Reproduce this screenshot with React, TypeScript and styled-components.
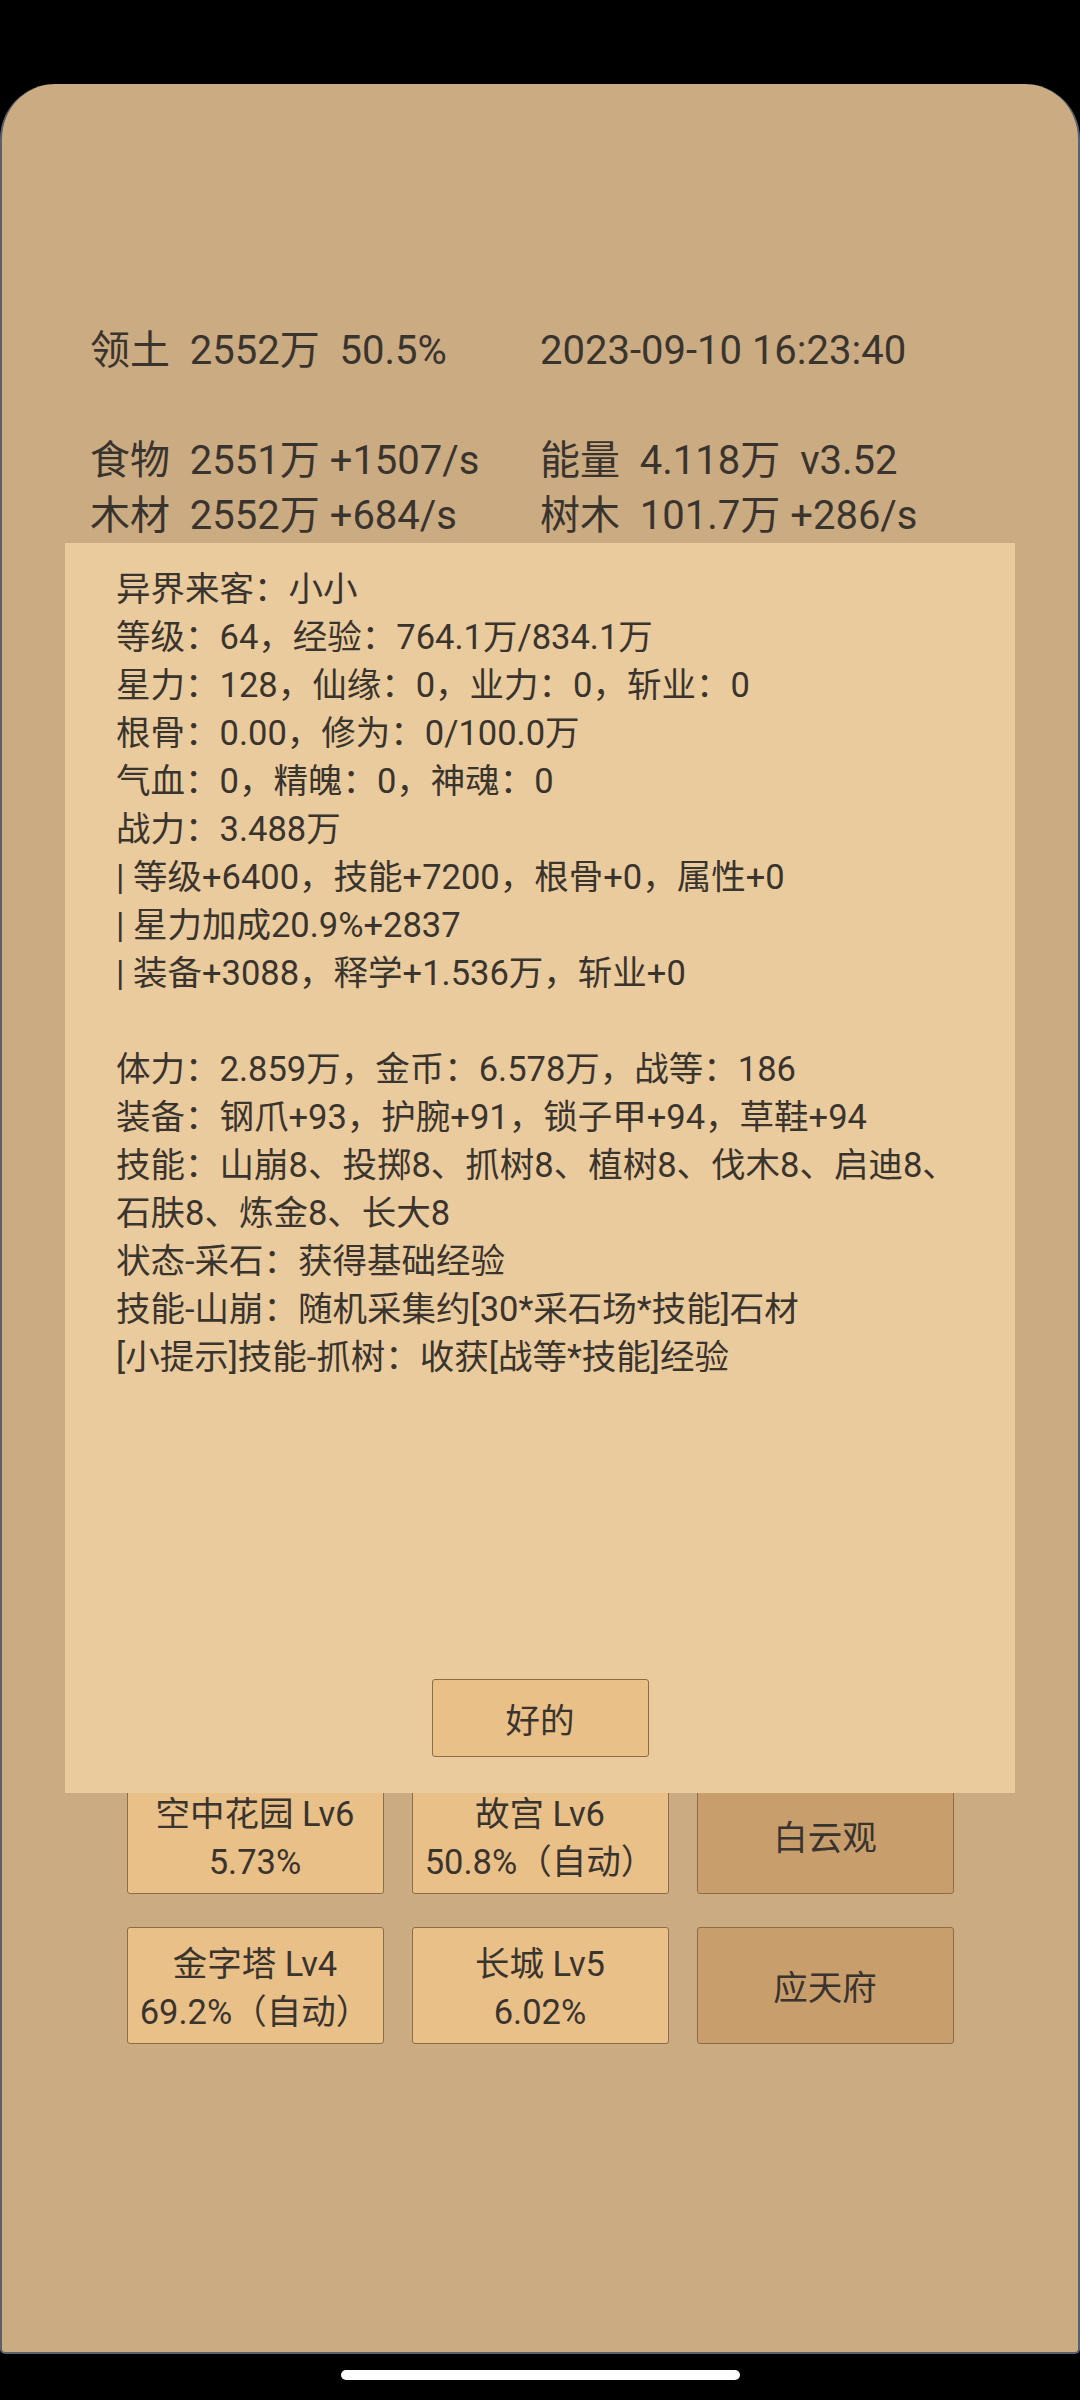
import React from "react";
import styled, { createGlobalStyle } from "styled-components";

const GlobalStyle = createGlobalStyle`
  body {
    margin: 0;
    background: #000;
    font-family: Roboto, "Noto Sans CJK SC", sans-serif;
    color: #3a342e;
  }
`;

const Screen = styled.div`
  width: 1080px;
  height: 2400px;
  background: #000;
  padding-top: 84px;
  box-sizing: border-box;
  display: flex;
  flex-direction: column;
  align-items: center;
`;

const Panel = styled.div`
  position: relative;
  width: 1080px;
  height: 2270px;
  box-sizing: border-box;
  background: #cbab82;
  border: 2px solid #58616e;
  border-top: none;
  border-radius: 55px 55px 5px 5px;
  padding-top: 239px;
`;

const Stats = styled.div`
  display: grid;
  grid-template-columns: 450px 450px;
  padding-left: 88px;
  font-size: 40px;
  line-height: 55px;
  white-space: pre;
`;

const StatCell = styled.div`
  height: 55px;
`;

const Buildings = styled.div`
  margin-top: 1234px;
  display: grid;
  grid-template-columns: repeat(3, 257px);
  grid-auto-rows: 117px;
  gap: 33px 28px;
  justify-content: center;
`;

const Building = styled.div<{ $dark?: boolean }>`
  box-sizing: border-box;
  background: ${({ $dark }) => ($dark ? "#c99e6d" : "#e9c088")};
  border: 1.5px solid #8d6c48;
  border-radius: 3px;
  display: flex;
  flex-direction: column;
  align-items: center;
  justify-content: center;
  font-size: 34.5px;
  line-height: 48px;
  white-space: nowrap;
  padding-top: 4px;
`;

const Modal = styled.div`
  position: absolute;
  left: 63px;
  top: 459px;
  width: 950px;
  height: 1250px;
  box-sizing: border-box;
  background: #eacb9d;
  padding: 22px 51px 36px;
  display: flex;
  flex-direction: column;
  font-size: 34.5px;
  line-height: 48px;
`;

const Line = styled.div`
  min-height: 48px;
`;

const OkButton = styled.button`
  margin-top: auto;
  align-self: center;
  width: 217px;
  height: 78px;
  background: #e9c088;
  border: 1.5px solid #8d6c48;
  border-radius: 3px;
  font-family: inherit;
  font-size: 34.5px;
  color: #3a342e;
  padding: 0;
`;

const HomeBar = styled.div`
  margin-top: 16px;
  width: 399px;
  height: 10px;
  border-radius: 5px;
  background: #fff;
`;

const stats = [
  "领土  2552万  50.5%",
  "2023-09-10 16:23:40",
  "",
  "",
  "食物  2551万 +1507/s",
  "能量  4.118万  v3.52",
  "木材  2552万 +684/s",
  "树木  101.7万 +286/s",
];

const lines = [
  "异界来客：小小",
  "等级：64，经验：764.1万/834.1万",
  "星力：128，仙缘：0，业力：0，斩业：0",
  "根骨：0.00，修为：0/100.0万",
  "气血：0，精魄：0，神魂：0",
  "战力：3.488万",
  "| 等级+6400，技能+7200，根骨+0，属性+0",
  "| 星力加成20.9%+2837",
  "| 装备+3088，释学+1.536万，斩业+0",
  "",
  "体力：2.859万，金币：6.578万，战等：186",
  "装备：钢爪+93，护腕+91，锁子甲+94，草鞋+94",
  "技能：山崩8、投掷8、抓树8、植树8、伐木8、启迪8、石肤8、炼金8、长大8",
  "状态-采石：获得基础经验",
  "技能-山崩：随机采集约[30*采石场*技能]石材",
  "[小提示]技能-抓树：收获[战等*技能]经验",
];

const buildings = [
  { lines: ["空中花园 Lv6", "5.73%"] },
  { lines: ["故宫 Lv6", "50.8%（自动）"] },
  { lines: ["白云观"], dark: true },
  { lines: ["金字塔 Lv4", "69.2%（自动）"] },
  { lines: ["长城 Lv5", "6.02%"] },
  { lines: ["应天府"], dark: true },
];

export default function App() {
  return (
    <>
      <GlobalStyle />
      <Screen>
        <Panel>
          <Stats>
            {stats.map((s, i) => (
              <StatCell key={i}>{s}</StatCell>
            ))}
          </Stats>
          <Buildings>
            {buildings.map((b, i) => (
              <Building key={i} $dark={b.dark}>
                {b.lines.map((l) => (
                  <div key={l}>{l}</div>
                ))}
              </Building>
            ))}
          </Buildings>
          <Modal>
            {lines.map((l, i) => (
              <Line key={i}>{l}</Line>
            ))}
            <OkButton>好的</OkButton>
          </Modal>
        </Panel>
        <HomeBar />
      </Screen>
    </>
  );
}
